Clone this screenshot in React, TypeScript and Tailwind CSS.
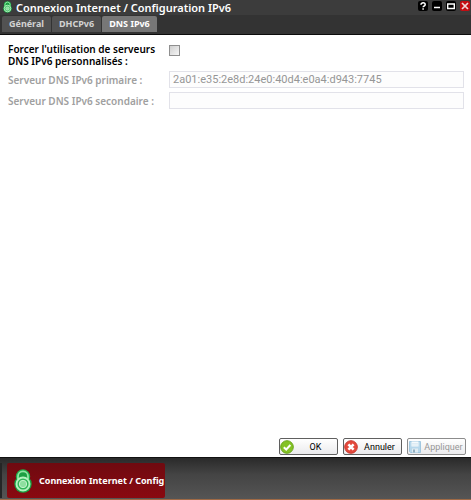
import cx from "clsx";
import { type ReactNode } from "react";

type Tab = {
  label: string;
  isSelected?: boolean;
};

const tabs: Tab[] = [
  { label: "Général" },
  { label: "DHCPv6" },
  { label: "DNS IPv6", isSelected: true },
];

function FreeboxLock({ className }: { className?: string }) {
  return (
    <svg viewBox="0 0 18 24" className={className} aria-hidden="true">
      <circle cx="9" cy="7.500" r="7.200" fill="#1fae4b" />
      <circle cx="9" cy="15" r="8.700" fill="#17a544" />
      <path
        d="M4 10V7.300a5 5 0 0 1 10 0V10"
        fill="#1c9f43"
        stroke="#8fe6a2"
        strokeWidth="1.800"
      />
      <circle cx="9" cy="15" r="6.500" fill="#2fb457" stroke="#b4f3bf" strokeWidth="1.900" />
      <circle cx="9" cy="15" r="3.700" fill="#8edfa0" stroke="#c3f4cb" strokeWidth="1" />
    </svg>
  );
}

function OkIcon() {
  return (
    <svg viewBox="0 0 14 14" className="size-3.5 shrink-0" aria-hidden="true">
      <circle cx="7" cy="7" r="6.300" fill="#84c225" stroke="#6aa51b" />
      <path d="M3.800 7.200 6.200 9.500 10.400 5" fill="none" stroke="#fff" strokeWidth="2" />
    </svg>
  );
}

function CancelIcon() {
  return (
    <svg viewBox="0 0 14 14" className="size-3.5 shrink-0" aria-hidden="true">
      <circle cx="7" cy="7" r="6.300" fill="#e4493c" stroke="#c93a30" />
      <path d="m4.400 4.400 5.200 5.200m0-5.200L4.400 9.600" stroke="#fff" strokeWidth="2.600" />
    </svg>
  );
}

function SaveIcon() {
  return (
    <svg viewBox="0 0 14 14" className="size-3.5 shrink-0 opacity-80" aria-hidden="true">
      <path d="M1.500 1.500h11v11h-10l-1-1z" fill="#a9d2ea" stroke="#8dbddb" />
      <path d="M3.500 1.500h7v5h-7z" fill="#f4fafd" />
      <path d="M4 3.500h6M4 5h6" stroke="#c5dfee" strokeWidth=".6" />
      <path d="M4 8.500h6v4H4z" fill="#dcebf3" />
      <path d="M5 9.500h2v3H5z" fill="#7d9fb3" />
    </svg>
  );
}

function WindowButton({ label, isClose, children }: { label: string; isClose?: boolean; children: ReactNode }) {
  return (
    <button
      type="button"
      aria-label={label}
      className={cx(
        "flex size-2.5 items-center justify-center rounded-xs text-white",
        isClose ? "bg-[#c40d12]" : "bg-black",
      )}
    >
      <svg viewBox="0 0 10 10" className="size-2.5" fill="none" stroke="currentColor">
        {children}
      </svg>
    </button>
  );
}

function ActionButton({ label, icon, disabled }: { label: string; icon: ReactNode; disabled?: boolean }) {
  return (
    <button
      type="button"
      disabled={disabled}
      className={cx(
        "flex h-[17px] w-[59px] items-center rounded-xs border bg-linear-to-b from-white to-[#ebebed] font-['Roboto',sans-serif] text-[9px] font-normal",
        disabled ? "border-[#8c8c8c] text-[#979797]" : "border-[#5f5f5f] text-black",
      )}
    >
      {icon}
      <span className="flex-1 text-center">{label}</span>
    </button>
  );
}

function TitleBar() {
  return (
    <header className="flex items-start bg-[#3c3c3c] pr-px pl-[3px]">
      <FreeboxLock className="mt-px h-3 w-[9px]" />
      <h1 className="ml-1 flex-1 text-[11px] leading-[15px] font-semibold whitespace-nowrap text-white">
        Connexion Internet / Configuration IPv6
      </h1>
      <div className="flex gap-1 pt-px">
        <WindowButton label="Aide">
          <path d="M3 3.700c0-2.500 4.200-2.400 4.200 0 0 1.400-2.100 1.200-2.100 2.600M5.100 7.200v1.600" strokeWidth="1.500" />
        </WindowButton>
        <WindowButton label="Réduire">
          <path d="M2 6.500h6" strokeWidth="1.500" />
        </WindowButton>
        <WindowButton label="Agrandir">
          <path d="M1.700 3h6.600v4.500H1.700z" strokeWidth="1.400" />
        </WindowButton>
        <WindowButton label="Fermer" isClose>
          <path d="m2 2 6 6m0-6L2 8" stroke="#f0dada" strokeWidth="1.700" />
        </WindowButton>
      </div>
    </header>
  );
}

function TabBar() {
  return (
    <nav className="flex h-5 items-start gap-px border-b border-[#0c0c0c] bg-[#333] px-0.5 pt-px">
      {tabs.map((tab) => (
        <button
          key={tab.label}
          type="button"
          aria-current={tab.isSelected ? "page" : undefined}
          className={cx(
            "h-4 rounded-t-xs px-[7px] text-[9px] leading-4 font-bold",
            tab.isSelected ? "bg-[#777] text-white" : "bg-[#525252] text-[#d2d2d2]",
          )}
        >
          {tab.label}
        </button>
      ))}
    </nav>
  );
}

function DnsForm() {
  const rowStyle = "grid grid-cols-[161px_1fr] items-center text-[#a0a0a0]";
  const inputStyle =
    "h-[17px] w-full min-w-0 border border-[#e2e2e9] bg-[#fdfdfd] px-[3px] font-['Roboto',sans-serif] text-[11px] font-normal text-[#969696]";

  return (
    <form className="flex flex-1 flex-col gap-1 pt-2 pb-0.5 text-[10px] leading-3 font-semibold">
      <div className="flex flex-col gap-1 pr-[7px] pl-2">
        <div className="grid grid-cols-[161px_1fr] items-start">
          <label htmlFor="force-dns">
            Forcer l'utilisation de serveurs
            <br />
            DNS IPv6 personnalisés :
          </label>
          <input
            id="force-dns"
            type="checkbox"
            className="mt-0.5 size-[11px] appearance-none border border-[#8f8f8f] bg-linear-to-br from-[#cfcfcf] to-[#f6f6f6] checked:bg-[#777]"
          />
        </div>
        <div className={rowStyle}>
          <label htmlFor="dns-primary">Serveur DNS IPv6 primaire :</label>
          <input
            id="dns-primary"
            className={inputStyle}
            defaultValue="2a01:e35:2e8d:24e0:40d4:e0a4:d943:7745"
            disabled
          />
        </div>
        <div className={rowStyle}>
          <label htmlFor="dns-secondary">Serveur DNS IPv6 secondaire :</label>
          <input id="dns-secondary" className={inputStyle} disabled />
        </div>
      </div>
      <div className="mt-auto flex justify-end gap-[5px] pr-[5px]">
        <ActionButton label="OK" icon={<OkIcon />} />
        <ActionButton label="Annuler" icon={<CancelIcon />} />
        <ActionButton label="Appliquer" icon={<SaveIcon />} disabled />
      </div>
    </form>
  );
}

function TaskBar() {
  return (
    <footer className="flex h-[43px] gap-[5px] border-t border-b border-t-[#111] border-b-[#a06a45] bg-linear-to-b from-[#2a2a2a] via-[#444] via-40% to-[#555] pt-[5px] pb-px">
      <div className="w-0.5 bg-[#252525]" />
      <button
        type="button"
        className="flex items-center gap-[7px] rounded-xs bg-linear-to-b from-[#6f0a10] to-[#8a0910] pr-px pl-[7px] text-white"
      >
        <FreeboxLock className="h-6 w-[18px] shrink-0" />
        <span className="text-[9px] font-bold whitespace-nowrap">Connexion Internet / Config</span>
      </button>
    </footer>
  );
}

export default function App() {
  return (
    <div className="flex min-h-screen flex-col bg-white font-['Noto_Sans',sans-serif] text-black">
      <TitleBar />
      <TabBar />
      <main className="flex flex-1 flex-col">
        <DnsForm />
      </main>
      <TaskBar />
    </div>
  );
}
